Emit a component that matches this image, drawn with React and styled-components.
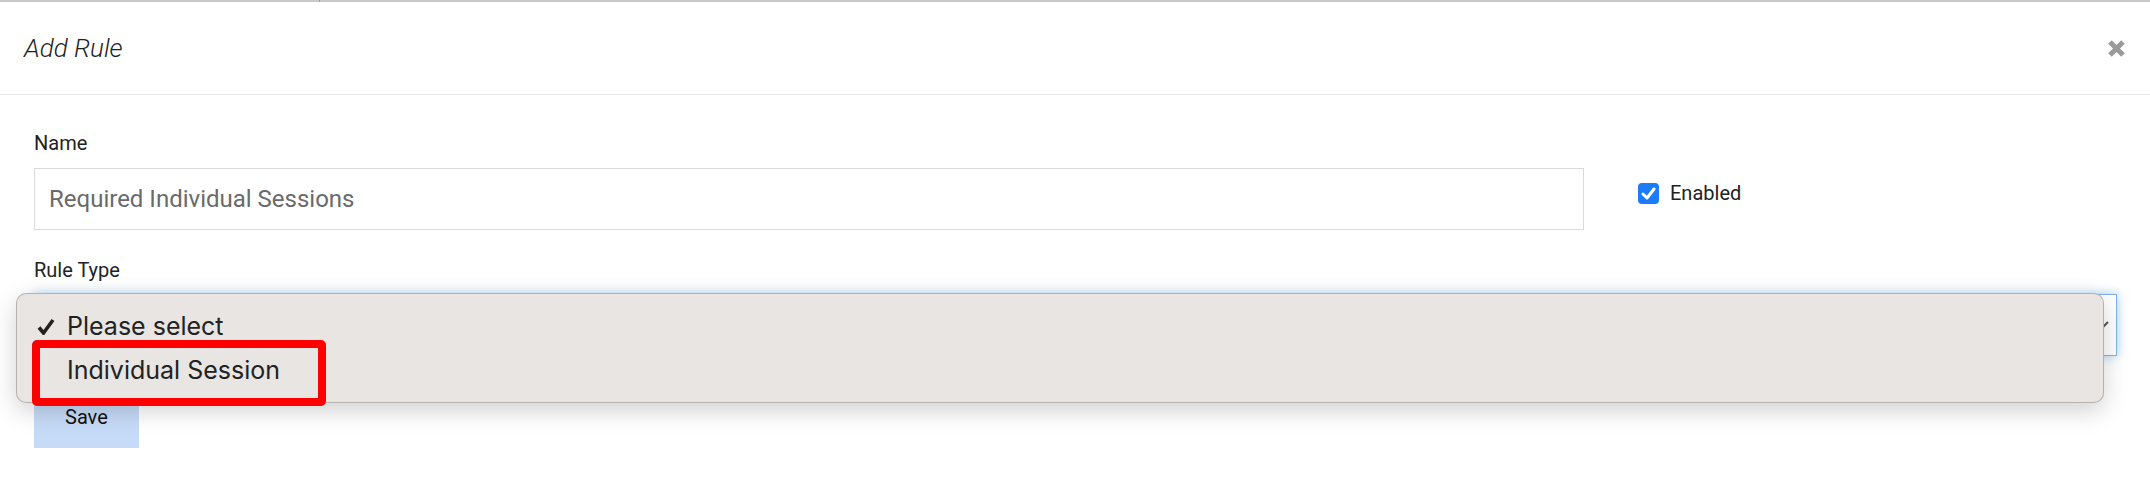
import React from 'react';
import styled, { createGlobalStyle } from 'styled-components';

const GlobalStyle = createGlobalStyle`
  * {
    box-sizing: border-box;
  }

  body {
    margin: 0;
    background: #ffffff;
    font-family: Roboto, 'Liberation Sans', sans-serif;
  }
`;

const Page = styled.div`
  width: 2150px;
  min-height: 500px;
  background: #ffffff;
`;

const TopBar = styled.div`
  display: flex;
  height: 2px;
  background: #c9c9c9;
`;

const TopTick = styled.div`
  width: 1px;
  margin-left: 319px;
  background: #9a9a9a;
`;

const Header = styled.div`
  height: 93px;
  display: flex;
  align-items: center;
  justify-content: space-between;
  padding: 0 24px;
  border-bottom: 1px solid #e9e9e9;
`;

const Title = styled.h4`
  margin: 0;
  font-size: 26px;
  font-style: italic;
  font-weight: 300;
  color: #1e1e1e;
`;

const CloseButton = styled.button`
  display: flex;
  padding: 0;
  border: none;
  background: none;
  cursor: pointer;
`;

const Body = styled.div`
  padding: 36px 33px 0 34px;
`;

const NameRow = styled.div`
  display: grid;
  grid-template-columns: 1550px auto;
  column-gap: 54px;
`;

const Field = styled.div`
  display: flex;
  flex-direction: column;
  margin-top: ${(p) => p.$top || 0}px;
`;

const Label = styled.label`
  font-size: 20px;
  line-height: 24px;
  color: #222222;
  margin-bottom: ${(p) => p.$gap || 13}px;
`;

const TextInput = styled.input`
  height: 62px;
  padding: 0 14px;
  border: 1px solid #dadada;
  font-family: Roboto, 'Liberation Sans', sans-serif;
  font-size: 24px;
  color: #6a6a6a;
  outline: none;
`;

const CheckGroup = styled.label`
  display: flex;
  align-items: center;
  gap: 11px;
  align-self: start;
  margin-top: 50px;
  font-size: 20px;
  line-height: 24px;
  color: #222222;
`;

const CheckBox = styled.span`
  display: flex;
  align-items: center;
  justify-content: center;
  width: 21px;
  height: 21px;
  border-radius: 4px;
  background: #1a7cf6;
`;

const SelectWrap = styled.div`
  position: relative;
`;

const SelectBox = styled.div`
  height: 62px;
  display: flex;
  align-items: center;
  justify-content: flex-end;
  padding-right: 6px;
  border: 1px solid #7fb3ee;
  box-shadow: 0 0 10px rgba(102, 175, 233, 0.6);
  background: #ffffff;
`;

const Menu = styled.div`
  position: absolute;
  left: -18px;
  top: -1px;
  width: 2088px;
  padding: 10px 0;
  background: #e9e5e2;
  border: 1px solid rgba(0, 0, 0, 0.22);
  border-radius: 10px;
  box-shadow: 0 8px 24px rgba(0, 0, 0, 0.18);
  font-family: Inter, 'Liberation Sans', sans-serif;
`;

const MenuItem = styled.div`
  height: 44px;
  display: flex;
  align-items: center;
  padding-left: 20px;
  font-size: 25px;
  color: #222222;
`;

const CheckMark = styled.span`
  display: flex;
  width: 30px;
`;

const Highlight = styled.div`
  position: absolute;
  left: 15px;
  top: 46px;
  width: 294px;
  height: 66px;
  border: 8px solid #ff0000;
  border-radius: 5px;
`;

const SaveButton = styled.button`
  display: block;
  height: 62px;
  margin-top: 30px;
  padding: 0 31px;
  border: none;
  background: #c6dbf7;
  font-family: Roboto, 'Liberation Sans', sans-serif;
  font-size: 20px;
  color: #111111;
`;

const options = [
  { label: 'Please select', selected: true },
  { label: 'Individual Session', selected: false },
];

export default function App() {
  return (
    <Page>
      <GlobalStyle />
      <TopBar>
        <TopTick />
      </TopBar>
      <Header>
        <Title>Add Rule</Title>
        <CloseButton aria-label="Close">
          <svg width="19" height="19" viewBox="0 0 19 19">
            <path
              d="M3 3 L16 16 M16 3 L3 16"
              stroke="#9a9a9a"
              strokeWidth="5"
              strokeLinecap="butt"
            />
          </svg>
        </CloseButton>
      </Header>

      <Body>
        <NameRow>
          <Field>
            <Label>Name</Label>
            <TextInput value="Required Individual Sessions" readOnly />
          </Field>
          <CheckGroup>
            <CheckBox>
              <svg width="15" height="13" viewBox="0 0 15 13">
                <path
                  d="M2 7 L6 11 L13 2"
                  fill="none"
                  stroke="#ffffff"
                  strokeWidth="3"
                  strokeLinecap="round"
                  strokeLinejoin="round"
                />
              </svg>
            </CheckBox>
            Enabled
          </CheckGroup>
        </NameRow>

        <Field $top={28}>
          <Label $gap={12}>Rule Type</Label>
          <SelectWrap>
            <SelectBox>
              <svg width="16" height="10" viewBox="0 0 16 10">
                <path
                  d="M2 2 L8 8 L14 2"
                  fill="none"
                  stroke="#555555"
                  strokeWidth="2"
                />
              </svg>
            </SelectBox>
            <Menu>
              {options.map((opt) => (
                <MenuItem key={opt.label}>
                  <CheckMark>
                    {opt.selected && (
                      <svg width="18" height="17" viewBox="0 0 18 17">
                        <path
                          d="M2 9.5 L6.5 15 L16 2"
                          fill="none"
                          stroke="#222222"
                          strokeWidth="3.6"
                        />
                      </svg>
                    )}
                  </CheckMark>
                  {opt.label}
                </MenuItem>
              ))}
              <Highlight />
            </Menu>
          </SelectWrap>
        </Field>

        <SaveButton>Save</SaveButton>
      </Body>
    </Page>
  );
}
